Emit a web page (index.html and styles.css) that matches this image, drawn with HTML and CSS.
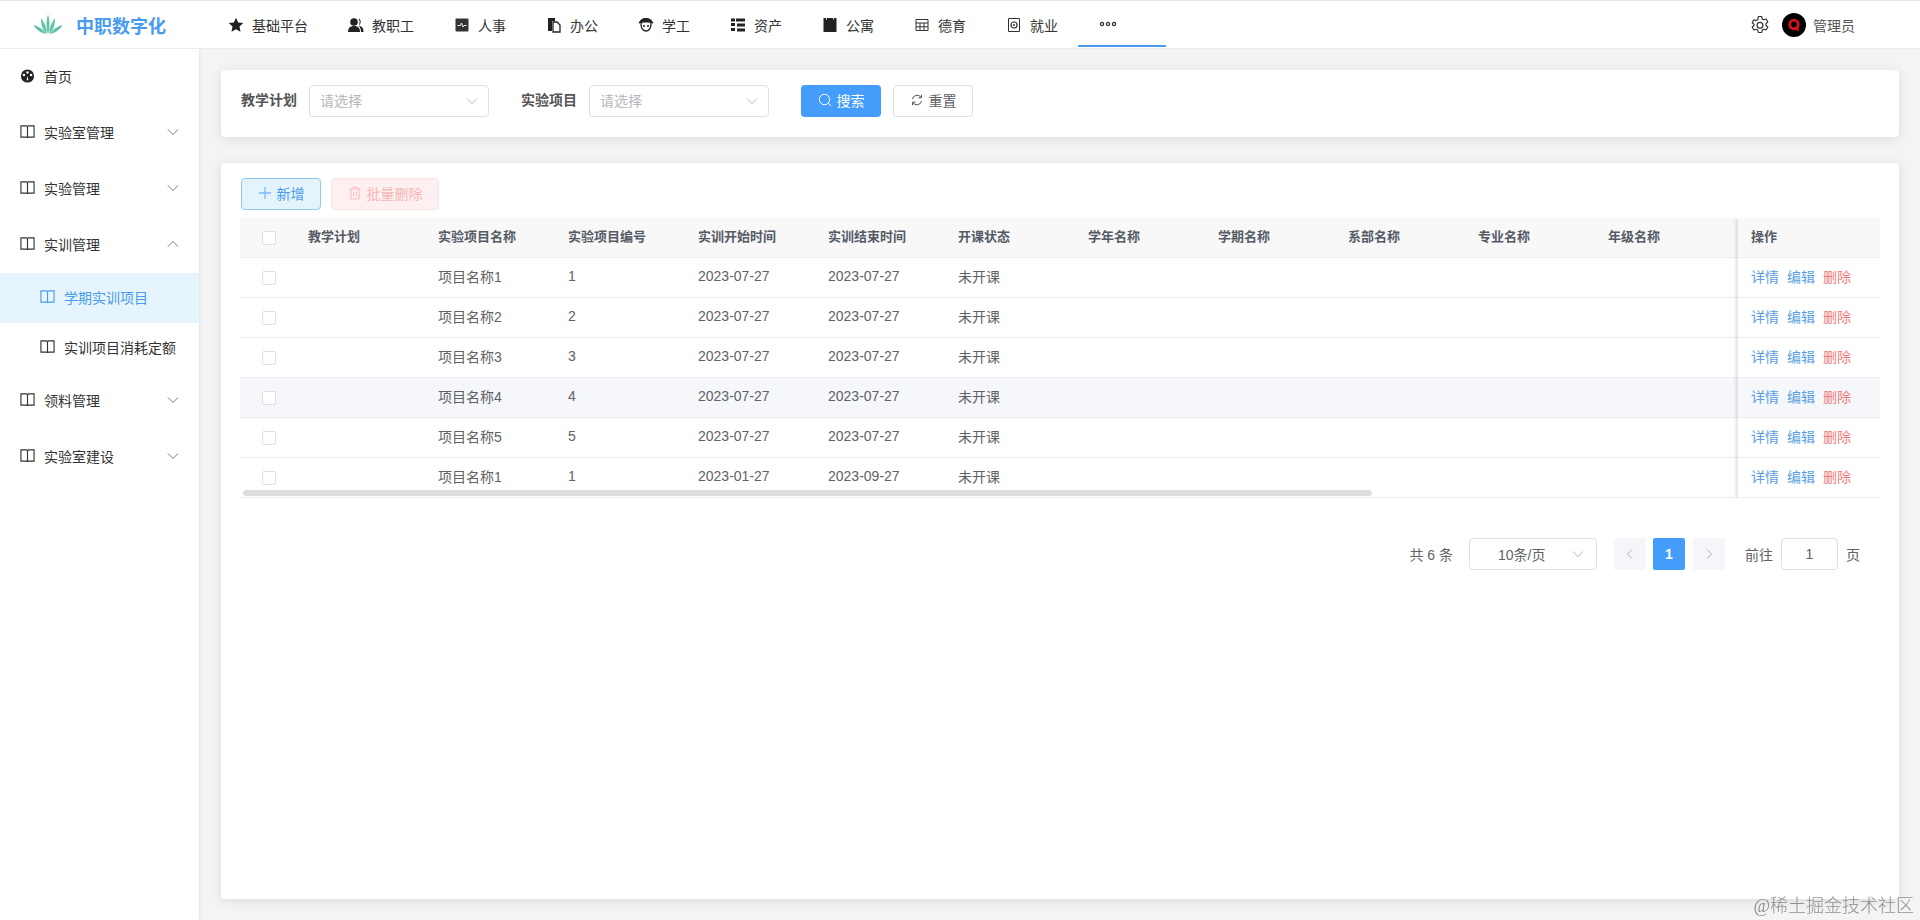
FILE: index.html
```html
<!DOCTYPE html>
<html lang="zh-CN">
<head>
<meta charset="utf-8">
<title>中职数字化</title>
<link rel="stylesheet" href="styles.css">
</head>
<body>
<svg class="defs" width="0" height="0" aria-hidden="true">
  <symbol id="book" viewBox="0 0 16 16"><path d="M1 1.500h5.500c1 0 1.500.5 1.500 1.300v11.700c0-.7-.5-1-1.200-1H1zM15 1.500H9.500C8.500 1.500 8 2 8 2.800v11.700c0-.7.5-1 1.200-1H15z" fill="none" stroke="currentColor" stroke-width="1.200"/></symbol>
  <symbol id="chev" viewBox="0 0 12 12"><path d="M1 3.500 6 8.500l5-5" fill="none" stroke="currentColor" stroke-width="1"/></symbol>
</svg>
<div class="app">
  <header class="topbar">
    <div class="brand">
      <svg class="logo" viewBox="0 0 32 24"><g fill="#5fc2a6"><path d="M16 22C13.500 15 14 8 16 1c2 7 2.500 14 0 21z"/><path d="M15 22C10 18 8.500 12 8.500 5c3.500 5 6 10 6.500 17z"/><path d="M17 22c5-4 6.500-10 6.500-17-3.500 5-6 10-6.500 17z"/><path d="M14 22C8 21 3.500 18 .5 12.500 6 14 11 17 14 22z"/><path d="M18 22c6-1 10.500-4 13.500-9.500C26 14 21 17 18 22z"/></g></svg>
      <span class="brand-name">中职数字化</span>
    </div>
    <nav class="topnav">
      <a class="topnav-item"><svg class="ti" viewBox="0 0 16 16"><path fill="#222" d="M8 .8l2.200 4.700 5.100.6-3.800 3.500 1 5.100L8 12.200l-4.500 2.500 1-5.100L.7 6.100l5.100-.6z"/></svg>基础平台</a>
      <a class="topnav-item"><svg class="ti" viewBox="0 0 16 16"><g fill="#222"><circle cx="6" cy="5" r="3.800"/><path d="M0 15c0-4 2-6 6-6s6 2 6 6z"/><path d="M10.500 1.500c2.500.5 3.500 5-.2 7 3.500.5 5.200 2.500 5.200 6.500H13c0-3-.8-5-2.500-6.500 1.500-2 1.500-5 0-7z"/></g></svg>教职工</a>
      <a class="topnav-item"><svg class="ti" viewBox="0 0 16 16"><rect x="1.500" y="1.500" width="13" height="13" rx="1" fill="#333"/><path d="M3.500 8.500h3l1-2.500 1.500 4 1-1.500h2.500" fill="none" stroke="#fff" stroke-width=".9"/></svg>人事</a>
      <a class="topnav-item"><svg class="ti" viewBox="0 0 16 16"><path fill="#222" d="M2 1h7v3H6v10H2z"/><path fill="#fff" stroke="#222" stroke-width="1.300" d="M7 5h4l3 3v7H7z"/></svg>办公</a>
      <a class="topnav-item"><svg class="ti" viewBox="0 0 16 16"><path d="M3 7.500C3 3.500 5 2 8 2s5 1.500 5 5.500c0 4-2.500 6.500-5 6.500S3 11.500 3 7.500z" fill="none" stroke="#222" stroke-width="1.300"/><path d="M.5 6.500C2 2.500 4.500 1 8 1s6 1.500 7.500 5.500c-4-1.500-11-1.500-15 0z" fill="#222"/><circle cx="6" cy="9" r="1" fill="#222"/><circle cx="10" cy="9" r="1" fill="#222"/></svg>学工</a>
      <a class="topnav-item"><svg class="ti" viewBox="0 0 16 16"><g fill="#222"><rect x="1" y="1.500" width="4" height="3"/><rect x="6" y="1.500" width="9" height="3"/><rect x="1" y="6" width="4" height="3"/><rect x="7" y="6.500" width="8" height="3"/><rect x="1" y="11" width="4" height="3"/><rect x="7" y="11.500" width="8" height="3"/></g></svg>资产</a>
      <a class="topnav-item"><svg class="ti" viewBox="0 0 16 16"><path fill="#222" d="M1.500 1h2.500v1.500h1V1h6v1.500h1V1h2.500v14h-13z"/></svg>公寓</a>
      <a class="topnav-item"><svg class="ti" viewBox="0 0 16 16"><path d="M2 2.500h12v11H2zM2 6h12M2 9.800h12M6 6v7.500M10 6v7.500" fill="none" stroke="#333" stroke-width="1"/></svg>德育</a>
      <a class="topnav-item"><svg class="ti" viewBox="0 0 16 16"><path d="M2.500 1.500h11v13h-11z" fill="none" stroke="#333" stroke-width="1"/><circle cx="8" cy="8" r="3" fill="none" stroke="#333" stroke-width="1.200"/><circle cx="8" cy="8" r="1" fill="#333"/></svg>就业</a>
      <a class="topnav-item more"><svg class="dots" viewBox="0 0 18 6"><g fill="none" stroke="#333" stroke-width="1.300"><circle cx="3" cy="3" r="1.600"/><circle cx="9" cy="3" r="1.600"/><circle cx="15" cy="3" r="1.600"/></g></svg></a>
    </nav>
    <div class="user">
      <svg class="gear" viewBox="0 0 20 20"><path d="M8.300 1.500h3.400l.5 2.400 1.600.9 2.300-.8 1.700 3-1.800 1.600v1.800l1.800 1.600-1.700 3-2.300-.8-1.600.9-.5 2.400H8.300l-.5-2.400-1.600-.9-2.300.8-1.700-3 1.800-1.600V9.400L2.200 7.800l1.700-3 2.300.8 1.600-.9z" fill="none" stroke="#333" stroke-width="1.200" stroke-linejoin="round"/><circle cx="10" cy="10.300" r="2.900" fill="none" stroke="#333" stroke-width="1.200"/></svg>
      <svg class="avatar" viewBox="0 0 24 24"><circle cx="12" cy="12" r="12" fill="#000"/><circle cx="12" cy="11.500" r="4.300" fill="none" stroke="#d8121c" stroke-width="2.800"/><path d="M13 14l3.500 3.500" stroke="#d8121c" stroke-width="2.200"/></svg>
      <span class="user-name">管理员</span>
    </div>
  </header>
  <div class="body">
    <aside class="sidebar">
      <a class="side-item"><svg class="si" viewBox="0 0 16 16"><circle cx="8" cy="8" r="7" fill="#222"/><circle cx="8" cy="4.300" r="1.300" fill="#fff"/><circle cx="4.200" cy="7" r="1.300" fill="#fff"/><circle cx="11.800" cy="7" r="1.300" fill="#fff"/><path d="M8 8l1 4.500H7z" fill="#fff"/></svg>首页</a>
      <a class="side-item"><svg class="si"><use href="#book"/></svg>实验室管理<svg class="chev"><use href="#chev"/></svg></a>
      <a class="side-item"><svg class="si"><use href="#book"/></svg>实验管理<svg class="chev"><use href="#chev"/></svg></a>
      <a class="side-item"><svg class="si"><use href="#book"/></svg>实训管理<svg class="chev up"><use href="#chev"/></svg></a>
      <a class="side-sub active"><svg class="si"><use href="#book"/></svg>学期实训项目</a>
      <a class="side-sub"><svg class="si"><use href="#book"/></svg>实训项目消耗定额</a>
      <a class="side-item"><svg class="si"><use href="#book"/></svg>领料管理<svg class="chev"><use href="#chev"/></svg></a>
      <a class="side-item"><svg class="si"><use href="#book"/></svg>实验室建设<svg class="chev"><use href="#chev"/></svg></a>
    </aside>
    <main class="content">
      <section class="card search-card">
        <label class="f-label">教学计划</label>
        <div class="select"><span class="ph">请选择</span><svg class="chev"><use href="#chev"/></svg></div>
        <label class="f-label second">实验项目</label>
        <div class="select"><span class="ph">请选择</span><svg class="chev"><use href="#chev"/></svg></div>
        <button class="btn primary"><svg class="bi" viewBox="0 0 14 14"><circle cx="6.500" cy="6.500" r="5.200" fill="none" stroke="#fff" stroke-width="1"/><path d="M10.300 10.300l2.700 2.700" stroke="#fff" stroke-width="1"/></svg>搜索</button>
        <button class="btn plain"><svg class="bi" viewBox="0 0 14 14"><path d="M2.500 6A4.700 4.700 0 0 1 11 4.300M11.500 8A4.700 4.700 0 0 1 3 9.700" fill="none" stroke="#555" stroke-width="1"/><path d="M11.500 1.800v3H8.500M2.500 12.200v-3h3" fill="none" stroke="#555" stroke-width="1"/></svg>重置</button>
      </section>
      <section class="card table-card">
        <div class="actions">
          <button class="btn add"><svg class="bi" viewBox="0 0 14 14"><path d="M7 1v12M1 7h12" stroke="#79bbff" stroke-width="1.300"/></svg>新增</button>
          <button class="btn batch"><svg class="bi" viewBox="0 0 14 14"><path d="M1.500 3h11M5 3V1.200h4V3M2.800 3v10h8.400V3M5.700 5.500v5M8.300 5.500v5" fill="none" stroke="#f8bcbc" stroke-width="1"/></svg>批量删除</button>
        </div>
        <div class="table-wrap">
          <table class="grid main-grid">
            <colgroup><col class="c0"><col class="c"><col class="c"><col class="c"><col class="c"><col class="c"><col class="c"><col class="c"><col class="c"><col class="c"><col class="c"><col class="c"><col class="c"></colgroup>
            <thead><tr><th><span class="cb"></span></th><th>教学计划</th><th>实验项目名称</th><th>实验项目编号</th><th>实训开始时间</th><th>实训结束时间</th><th>开课状态</th><th>学年名称</th><th>学期名称</th><th>系部名称</th><th>专业名称</th><th>年级名称</th><th></th></tr></thead>
            <tbody>
              <tr><td><span class="cb"></span></td><td></td><td>项目名称1</td><td>1</td><td>2023-07-27</td><td>2023-07-27</td><td>未开课</td><td></td><td></td><td></td><td></td><td></td><td></td></tr>
              <tr><td><span class="cb"></span></td><td></td><td>项目名称2</td><td>2</td><td>2023-07-27</td><td>2023-07-27</td><td>未开课</td><td></td><td></td><td></td><td></td><td></td><td></td></tr>
              <tr><td><span class="cb"></span></td><td></td><td>项目名称3</td><td>3</td><td>2023-07-27</td><td>2023-07-27</td><td>未开课</td><td></td><td></td><td></td><td></td><td></td><td></td></tr>
              <tr class="hover"><td><span class="cb"></span></td><td></td><td>项目名称4</td><td>4</td><td>2023-07-27</td><td>2023-07-27</td><td>未开课</td><td></td><td></td><td></td><td></td><td></td><td></td></tr>
              <tr><td><span class="cb"></span></td><td></td><td>项目名称5</td><td>5</td><td>2023-07-27</td><td>2023-07-27</td><td>未开课</td><td></td><td></td><td></td><td></td><td></td><td></td></tr>
              <tr><td><span class="cb"></span></td><td></td><td>项目名称1</td><td>1</td><td>2023-01-27</td><td>2023-09-27</td><td>未开课</td><td></td><td></td><td></td><td></td><td></td><td></td></tr>
            </tbody>
          </table>
          <table class="grid fixed-col">
            <thead><tr><th>操作</th></tr></thead>
            <tbody>
              <tr><td><a class="lk">详情</a><a class="lk">编辑</a><a class="lk del">删除</a></td></tr>
              <tr><td><a class="lk">详情</a><a class="lk">编辑</a><a class="lk del">删除</a></td></tr>
              <tr><td><a class="lk">详情</a><a class="lk">编辑</a><a class="lk del">删除</a></td></tr>
              <tr class="hover"><td><a class="lk">详情</a><a class="lk">编辑</a><a class="lk del">删除</a></td></tr>
              <tr><td><a class="lk">详情</a><a class="lk">编辑</a><a class="lk del">删除</a></td></tr>
              <tr><td><a class="lk">详情</a><a class="lk">编辑</a><a class="lk del">删除</a></td></tr>
            </tbody>
          </table>
          <div class="hscroll"></div>
        </div>
        <div class="pager">
          <span class="total">共 6 条</span>
          <div class="select size"><span class="size-val">10条/页</span><svg class="chev"><use href="#chev"/></svg></div>
          <button class="pg"><svg class="pg-ic" viewBox="0 0 12 12"><path d="M8 1.500 3.500 6 8 10.500" fill="none" stroke="#b0b3b8" stroke-width="1"/></svg></button>
          <button class="pg on">1</button>
          <button class="pg next"><svg class="pg-ic" viewBox="0 0 12 12"><path d="M4 1.500 8.500 6 4 10.500" fill="none" stroke="#b0b3b8" stroke-width="1"/></svg></button>
          <span class="goto">前往</span>
          <div class="page-input">1</div>
          <span class="goto-end">页</span>
        </div>
      </section>
    </main>
  </div>
</div>
<div class="watermark">@稀土掘金技术社区</div>
</body>
</html>
```
FILE: styles.css
```css
* { box-sizing: border-box; }
html, body { margin: 0; height: 100%; }
body {
  font-family: "Liberation Sans", "Noto Sans CJK SC", sans-serif;
  font-size: 14px;
  color: #333;
  background: #f4f4f4;
  overflow: hidden;
}
a { text-decoration: none; color: inherit; }
button { font: inherit; }
.defs { position: absolute; }
.app { display: flex; flex-direction: column; height: 920px; }

.topbar {
  height: 49px;
  flex: none;
  display: flex;
  align-items: center;
  background: #fff;
  border-top: 1px solid #e4e4e4;
  border-bottom: 1px solid #ececec;
  position: relative;
  z-index: 2;
}
.brand { width: 208px; flex: none; display: flex; align-items: center; padding-left: 33px; gap: 13px; }
.logo { width: 30px; height: 23px; flex: none; }
.brand-name { font-size: 18px; font-weight: 700; color: #4a9bf0; white-space: nowrap; }
.topnav { display: flex; height: 100%; }
.topnav-item {
  display: flex;
  align-items: center;
  padding: 0 20px;
  color: #333;
  gap: 8px;
  white-space: nowrap;
}
.ti { width: 16px; height: 16px; flex: none; }
.topnav-item.more { width: 88px; padding: 2px 0 0 21px; border-bottom: 2px solid #4a9bea; height: 46px; }
.dots { width: 18px; height: 6px; }
.user { margin-left: auto; display: flex; align-items: center; padding-right: 65px; }
.gear { width: 20px; height: 20px; margin-right: 12px; }
.avatar { width: 24px; height: 24px; margin-right: 7px; }
.user-name { color: #555; }

.body { flex: 1; display: flex; min-height: 0; }
.sidebar {
  width: 199px;
  flex: none;
  background: #fff;
  box-shadow: 1px 0 3px rgba(0, 0, 0, .08);
  color: #333;
}
.side-item {
  height: 56px;
  display: flex;
  align-items: center;
  padding: 0 20px 2px 20px;
  gap: 9px;
}
.side-sub {
  height: 50px;
  display: flex;
  align-items: center;
  padding: 0 0 2px 40px;
  gap: 9px;
}
.side-sub.active { background: #e6f5fd; color: #4a9bea; }
.si { width: 15px; height: 16px; flex: none; }
.chev { width: 12px; height: 12px; margin-left: auto; flex: none; color: #777; }
.chev.up { transform: rotate(180deg); }

.content {
  flex: 1;
  min-width: 0;
  display: flex;
  flex-direction: column;
  padding: 21px 21px 21px 22px;
  gap: 26px;
}
.card {
  background: #fff;
  border-radius: 4px;
  box-shadow: 0 2px 12px rgba(0, 0, 0, .1);
}
.search-card {
  height: 67px;
  flex: none;
  display: flex;
  align-items: flex-start;
  padding: 15px 20px 0;
}
.f-label { line-height: 30px; font-weight: 600; color: #555; width: 68px; flex: none; }
.f-label.second { margin-left: 32px; }
.select {
  width: 180px;
  height: 32px;
  flex: none;
  border: 1px solid #dcdfe6;
  border-radius: 4px;
  display: flex;
  align-items: center;
  padding: 0 10px 0 10px;
}
.ph { color: #b4b7bc; padding-bottom: 2px; }
.select .chev { color: #b0b3b8; }
.btn {
  height: 32px;
  border-radius: 4px;
  display: inline-flex;
  align-items: center;
  justify-content: center;
  gap: 5px;
  padding: 0 0 2px;
  border: 1px solid transparent;
  cursor: pointer;
}
.bi { width: 14px; height: 14px; flex: none; }
.btn.primary { width: 80px; margin-left: 32px; background: #449dfa; color: #fff; }
.btn.plain { width: 80px; margin-left: 12px; background: #fff; border-color: #dcdfe6; color: #606266; }

.table-card { flex: 1; min-height: 0; padding: 15px 19px 0; }
.actions { display: flex; gap: 10px; padding-left: 1px; height: 32px; }
.btn.add { width: 80px; background: #e3f4fd; border-color: #8ccbee; color: #4a9bea; }
.btn.batch { width: 108px; background: #fef0f0; border-color: #fde2e2; color: #f7b6b6; }
.table-wrap { position: relative; margin-top: 8px; overflow: hidden; height: 280px; }
.grid { border-collapse: separate; border-spacing: 0; table-layout: fixed; font-size: 14px; }
.main-grid { width: 1618px; }
.c0 { width: 58px; }
.c { width: 130px; }
.grid th, .grid td {
  height: 40px;
  padding: 0 10px 4px;
  text-align: left;
  border-bottom: 1px solid #ebeef5;
  white-space: nowrap;
  overflow: hidden;
  color: #606266;
}
.grid th { background: #f8f8f9; font-size: 13px; font-weight: 700; color: #555b66; }
.grid th:first-child, .grid td:first-child { padding: 0 0 0 22px; }
.grid tr.hover td { background: #f5f7fa; }
.cb {
  display: block;
  width: 14px;
  height: 14px;
  background: #fff;
  border: 1px solid #dcdfe6;
  border-radius: 2px;
}
.fixed-col {
  position: absolute;
  top: 0;
  right: 0;
  width: 142px;
  background: #fff;
  box-shadow: -2px 0 4px rgba(0, 0, 0, .12);
}
.grid.fixed-col th:first-child, .grid.fixed-col td:first-child { padding: 0 0 4px 13px; }
.lk { color: #5a9fe6; margin-right: 8px; }
.lk.del { color: #ef7b7b; margin-right: 0; }
.hscroll {
  position: absolute;
  left: 3px;
  top: 272px;
  width: 1129px;
  height: 6px;
  border-radius: 3px;
  background: #dcdede;
}

.pager { display: flex; align-items: center; justify-content: flex-end; margin-top: 40px; padding-right: 20px; height: 32px; color: #606266; }
.total { margin-right: 16px; }
.select.size { width: 128px; padding-right: 12px; }
.size-val { flex: 1; padding-left: 18px; }
.pg {
  width: 32px;
  height: 32px;
  margin-left: 7px;
  border: 0;
  padding: 0;
  border-radius: 2px;
  background: #f4f6fa;
  display: flex;
  align-items: center;
  justify-content: center;
  color: #fff;
  font-weight: 700;
}
.select.size + .pg { margin-left: 17px; }
.pg.on { background: #449dfa; }
.pg.next { margin-left: 8px; }
.pg-ic { width: 12px; height: 12px; }
.goto { margin-left: 20px; }
.page-input {
  width: 57px;
  height: 32px;
  margin-left: 8px;
  border: 1px solid #dcdfe6;
  border-radius: 4px;
  line-height: 30px;
  text-align: center;
}
.goto-end { margin-left: 8px; }

.watermark {
  position: fixed;
  right: 6px;
  bottom: 3px;
  font-family: "Liberation Serif", "Noto Sans CJK SC", serif;
  font-size: 18px;
  font-weight: 300;
  color: rgba(110, 110, 110, .75);
  white-space: nowrap;
}
```
